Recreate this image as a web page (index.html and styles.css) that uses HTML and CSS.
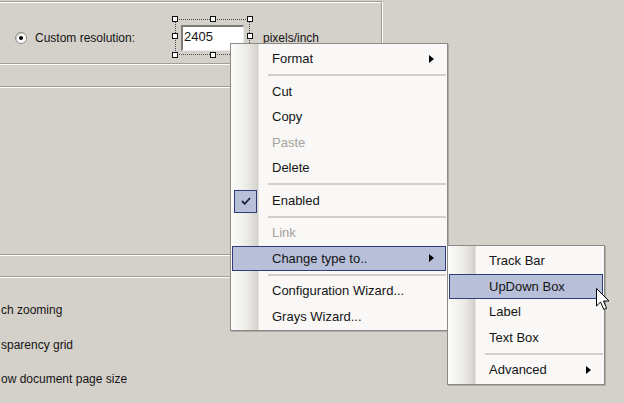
FILE: index.html
```html
<!DOCTYPE html>
<html lang="en">
<head>
  <meta charset="UTF-8" />
  <title>Resolution settings</title>
  <link rel="stylesheet" href="styles.css">
</head>
<body>
  <div class="dialog">
    <div class="group group-res">
      <div class="res-row">
        <span class="radio"><span class="dot"></span></span>
        <span class="res-label">Custom resolution:</span>
        <span class="sel">
          <span class="textbox">2405</span>
          <span class="frame"></span>
          <span class="handle h-tl"></span>
          <span class="handle h-tc"></span>
          <span class="handle h-tr"></span>
          <span class="handle h-ml"></span>
          <span class="handle h-mr"></span>
          <span class="handle h-bl"></span>
          <span class="handle h-bc"></span>
          <span class="handle h-br"></span>
        </span>
        <span class="unit">pixels/inch</span>
      </div>
    </div>
    <div class="group group-mid"></div>
    <div class="group group-view">
      <div class="opt">ch zooming</div>
      <div class="opt">sparency grid</div>
      <div class="opt">ow document page size</div>
    </div>
  </div>

  <div class="menu menu-main">
    <div class="item">Format<span class="arrow"></span></div>
    <div class="sep"></div>
    <div class="item">Cut</div>
    <div class="item">Copy</div>
    <div class="item disabled">Paste</div>
    <div class="item">Delete</div>
    <div class="sep"></div>
    <div class="item">
      <span class="check">
        <svg width="10" height="8" viewBox="0 0 10 8"><path d="M1 4 L3.8 6.8 L9 1" fill="none" stroke="#1c2340" stroke-width="1.8"/></svg>
      </span>
      Enabled
    </div>
    <div class="sep"></div>
    <div class="item disabled">Link</div>
    <div class="item active">Change type to..<span class="arrow"></span></div>
    <div class="sep"></div>
    <div class="item">Configuration Wizard...</div>
    <div class="item">Grays Wizard...</div>
  </div>

  <div class="menu menu-sub">
    <div class="item">Track Bar</div>
    <div class="item active">UpDown Box</div>
    <div class="item">Label</div>
    <div class="item">Text Box</div>
    <div class="sep"></div>
    <div class="item">Advanced<span class="arrow"></span></div>
  </div>

  <svg class="cursor" width="14" height="24" viewBox="0 0 14 24">
    <path d="M0.5 0.5 V18 L4.6 14 L7.8 21.5 L10.6 20.3 L7.5 13 H13 Z" fill="#fff" stroke="#000" stroke-width="1" stroke-linejoin="round"/>
  </svg>
</body>
</html>
```

FILE: styles.css
```css
:root {
  --face: #d4d1ca;
  --etch-dark: #a19e97;
  --etch-light: #fdfdfc;
  --menu-bg: #f9f8f6;
  --menu-border: #8b8a86;
  --hi-bg: #b8c0d9;
  --hi-border: #2f3d7a;
  --text: #141414;
  --text-off: #a4a29d;
}
* { box-sizing: border-box; margin: 0; padding: 0; }
html, body { width: 624px; height: 403px; overflow: hidden; }
body { background: var(--face); font-family: "Liberation Sans", Arial, sans-serif; color: var(--text); position: relative; }

.dialog { padding-top: 1px; width: 400px; }
.group { margin-left: -10px; width: 392px; border: 1px solid var(--etch-dark); box-shadow: inset 1px 1px 0 var(--etch-light), 1px 1px 0 var(--etch-light); }
.group-res { height: 63px; padding: 23px 0 0 24px; }
.group-mid { height: 169px; margin-top: 22px; }
.group-view { height: 126px; margin-top: 21px; padding: 16px 0 0 10px; width: 440px; border-right: none; border-bottom: none; box-shadow: inset 1px 1px 0 var(--etch-light); }

.res-row { display: flex; align-items: center; height: 26px; font-size: 12px; }
.radio { width: 12px; height: 12px; border-radius: 50%; background: #fff; border: 1px solid #8d8b86; display: flex; align-items: center; justify-content: center; box-shadow: inset 1px 1px 0 #c9c7c1; }
.radio .dot { width: 4px; height: 4px; border-radius: 50%; background: #000; }
.res-label { margin-left: 8px; width: 146px; }
.unit { margin-left: 19px; }

.sel { position: relative; display: block; width: 63px; height: 26px; }
.textbox { display: block; width: 63px; height: 26px; background: #fff; border-top: 2px solid #7d7b77; border-left: 2px solid #7d7b77; border-right: 1px solid #eeede9; border-bottom: 1px solid #eeede9; font-size: 13px; line-height: 20px; padding-left: 1px; }
.frame { position: absolute; left: -6px; top: -6px; right: -6px; bottom: -4px; border: 1px dotted #4a4a4a; }
.handle { position: absolute; width: 6px; height: 6px; background: #fff; border: 1px solid #111; }
.h-tl { left: -9px; top: -9px; }
.h-tc { left: 29px; top: -9px; }
.h-tr { right: -9px; top: -9px; }
.h-ml { left: -9px; top: 8px; }
.h-mr { right: -9px; top: 8px; }
.h-bl { left: -9px; bottom: -7px; }
.h-bc { left: 29px; bottom: -7px; }
.h-br { right: -9px; bottom: -7px; }

.opt { font-size: 12px; line-height: 34.7px; }

.menu { position: absolute; background: linear-gradient(to right, #fcfcfb 0, #ecebe7 16px, #d2d0ca 27px, var(--menu-bg) 28px); border: 1px solid var(--menu-border); box-shadow: 1px 1px 0 rgba(0, 0, 0, 0.18); font-size: 13px; }
.menu-main { left: 230px; top: 43px; width: 218px; padding: 2px 0 1px; }
.menu-sub { left: 447px; top: 245px; width: 158px; padding: 2px 0 1px; }
.item { position: relative; display: flex; align-items: center; height: 25.5px; margin: 0 1px; padding: 0 11px 0 39px; border: 1px solid transparent; }
.item.disabled { color: var(--text-off); }
.item.active { background: var(--hi-bg); border-color: var(--hi-border); }
.arrow { margin-left: auto; width: 0; height: 0; border-top: 4px solid transparent; border-bottom: 4px solid transparent; border-left: 5px solid #000; }
.sep { height: 7px; margin: 0 1px 0 37px; display: flex; align-items: center; }
.sep::before { content: ""; display: block; width: 100%; border-top: 2px solid #d0cfcb; }
.check { position: absolute; left: 1px; top: 1px; width: 23px; height: 23px; background: var(--hi-bg); border: 1px solid var(--hi-border); display: flex; align-items: center; justify-content: center; }

.cursor { position: absolute; left: 596px; top: 288px; }
```
